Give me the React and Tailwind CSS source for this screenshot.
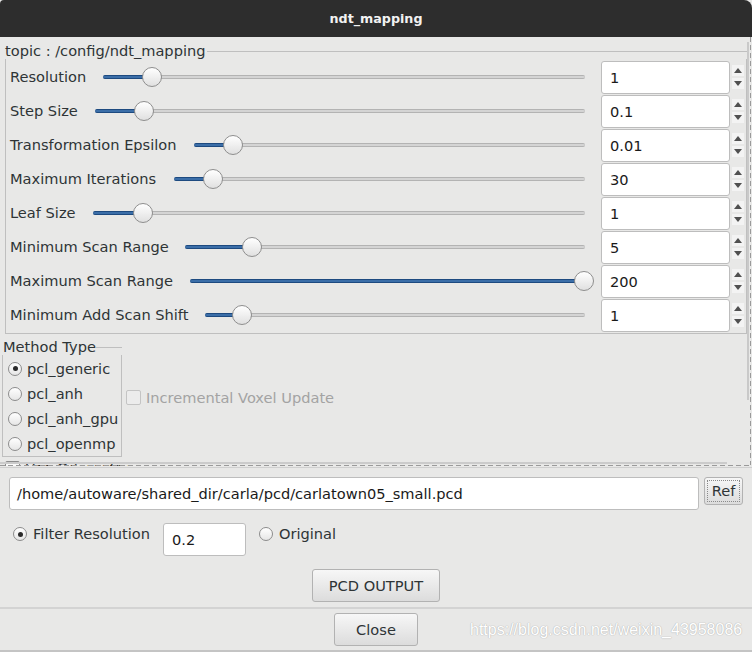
import React from "react";

const sliders = [
  { label: "Resolution", lw: 93, fill: 49, value: "1" },
  { label: "Step Size", lw: 85, fill: 49, value: "0.1" },
  { label: "Transformation Epsilon", lw: 184, fill: 39, value: "0.01" },
  { label: "Maximum Iterations", lw: 164, fill: 39, value: "30" },
  { label: "Leaf Size", lw: 83, fill: 50, value: "1" },
  { label: "Minimum Scan Range", lw: 175, fill: 67, value: "5" },
  { label: "Maximum Scan Range", lw: 180, fill: 394, value: "200" },
  { label: "Minimum Add Scan Shift", lw: 195, fill: 37, value: "1" },
];

function Slider({ fill }) {
  return (
    <div className="flex-1 flex items-center h-[20px]">
      <div
        className="h-[4px] shrink-0 bg-[#3b6ea8] border-y border-[#1d4a80] rounded-l-full"
        style={{ width: fill }}
      />
      <div className="relative z-10 shrink-0 w-[20px] h-[20px] -mx-[10px] rounded-full border border-[#8e8e8e] bg-gradient-to-b from-white to-[#e0e0e0]" />
      <div className="flex-1 h-[4px] bg-[#d4d4d4] border-y border-[#b3b3b3] rounded-r-full" />
    </div>
  );
}

function SpinArrows() {
  return (
    <div className="w-[16px] flex flex-col items-center gap-[2px]">
      <div className="w-[12px] h-[11px] bg-[#f3f3f3] flex items-center justify-center">
        <div className="w-0 h-0 border-x-[4px] border-x-transparent border-b-[5px] border-b-[#505050]" />
      </div>
      <div className="w-[12px] h-[11px] bg-[#f3f3f3] flex items-center justify-center">
        <div className="w-0 h-0 border-x-[4px] border-x-transparent border-t-[5px] border-t-[#505050]" />
      </div>
    </div>
  );
}

function Radio({ checked }) {
  return (
    <div className="w-[14px] h-[14px] shrink-0 rounded-full border border-[#8c8c8c] bg-gradient-to-b from-white to-[#e6e6e6] flex items-center justify-center">
      {checked && <div className="w-[5px] h-[5px] rounded-full bg-[#2a2a2a]" />}
    </div>
  );
}

function Button({ children, className }) {
  return (
    <div
      className={
        "flex items-center justify-center rounded-[3px] border border-[#b2b2b2] bg-gradient-to-b from-[#f7f7f7] to-[#dcdcdc] text-[#2e3436] " +
        className
      }
    >
      {children}
    </div>
  );
}

export default function App() {
  return (
    <div className="w-[752px] h-[652px] bg-white overflow-hidden font-['DejaVu_Sans',sans-serif] text-[14.6px] text-[#2e3436]">
      <div className="w-full h-full flex flex-col bg-[#e8e8e7]">
        {/* Title bar */}
        <div className="h-[37px] shrink-0 bg-[#2d2d2d] rounded-tl-[4px] rounded-tr-[8px] flex items-center justify-center">
          <span className="text-[12.7px] font-bold text-[#f2f2f2]">ndt_mapping</span>
        </div>

        {/* Scroll area */}
        <div className="h-[430px] shrink-0 relative">
          <div className="h-[429px] flex">
            <div className="flex-1 overflow-hidden pt-[6px]">
              {/* topic group */}
              <div className="ml-[5px]">
                <div className="h-[16px] flex items-center">
                  <span className="leading-[16px] whitespace-nowrap">topic : /config/ndt_mapping</span>
                  <div className="flex-1 h-px bg-[#bfbfbf] ml-[2px] mt-[1px]" />
                </div>
                <div className="border-l border-r border-b border-[#bfbfbf] pt-[1px] pb-[1px]">
                  {sliders.map((s) => (
                    <div key={s.label} className="h-[34px] flex items-start pl-[4px]">
                      <div className="h-[34px] flex items-center shrink-0" style={{ width: s.lw }}>
                        <span className="whitespace-nowrap">{s.label}</span>
                      </div>
                      <div className="flex-1 h-[34px] flex items-center">
                        <Slider fill={s.fill} />
                      </div>
                      <div className="ml-[16px] mt-[1px] w-[129px] h-[33px] shrink-0 bg-white border border-[#bdbdbd] rounded-[3px] flex items-center pl-[8px] text-[#1a1a1a]">
                        {s.value}
                      </div>
                      <div className="h-[34px] flex items-center">
                        <SpinArrows />
                      </div>
                    </div>
                  ))}
                </div>
              </div>

              {/* Method type row */}
              <div className="flex items-center ml-[2px] mt-[5px]">
                <div className="w-[120px] shrink-0">
                  <div className="h-[16px] flex items-center">
                    <span className="leading-[16px] whitespace-nowrap pl-[1px]">Method Type</span>
                    <div className="flex-1 h-px bg-[#bfbfbf] mt-[1px]" />
                  </div>
                  <div className="border-l border-r border-b border-[#bfbfbf] pt-[1px] pl-[5px]">
                    {[
                      ["pcl_generic", true],
                      ["pcl_anh", false],
                      ["pcl_anh_gpu", false],
                      ["pcl_openmp", false],
                    ].map(([t, c]) => (
                      <div key={t} className="h-[25px] flex items-center gap-[5px]">
                        <Radio checked={c} />
                        <span className="whitespace-nowrap">{t}</span>
                      </div>
                    ))}
                  </div>
                </div>
                <div className="ml-[4px] flex items-center gap-[5px]">
                  <div className="w-[15px] h-[15px] rounded-[2px] border border-[#c4c4c4] bg-[#ececec]" />
                  <span className="text-[#a3a3a3] whitespace-nowrap">Incremental Voxel Update</span>
                </div>
              </div>

              {/* Use Odometry (clipped by the scroll area) */}
              <div className="flex items-start gap-[5px] ml-[5px] mt-[2px] h-[20px]">
                <div className="w-[15px] h-[15px] mt-[2px] rounded-[2px] border border-[#8c8c8c] bg-gradient-to-b from-white to-[#e6e6e6]" />
                <span className="whitespace-nowrap leading-[18px]">Use Odometry</span>
              </div>
            </div>
            {/* vertical scrollbar */}
            <div className="w-[5px] shrink-0 flex">
              <div className="w-[2px] pt-[5px]">
                <div className="h-[358px] bg-[#c9c9c9]" />
              </div>
              <div className="w-[1px]" />
              <div className="w-[1px] h-[428px] bg-[repeating-linear-gradient(180deg,#9a9a9a_0_5px,transparent_5px_8px)]" />
            </div>
          </div>
          {/* horizontal scrollbar, drawn over the content's bottom edge */}
          <div className="absolute left-0 bottom-[1px] h-[4px] w-[751px] flex flex-col">
            <div className="h-[2px] w-[727px] bg-[#cbcbcb]" />
            <div className="h-[1px]" />
            <div className="h-[1px] w-[751px] bg-[repeating-linear-gradient(90deg,#9a9a9a_0_5px,transparent_5px_8px)]" />
          </div>
        </div>

        <div className="h-px shrink-0 bg-[#cfcfcf]" />

        {/* Bottom panel */}
        <div className="flex-1 flex flex-col">
          <div className="flex items-start pl-[9px] pt-[9px]">
            <div className="w-[690px] h-[33px] bg-white border border-[#bdbdbd] rounded-[3px] flex items-center pl-[7px] text-[#1a1a1a] whitespace-nowrap">
              /home/autoware/shared_dir/carla/pcd/carlatown05_small.pcd
            </div>
            <Button className="ml-[5px] w-[39px] h-[28px] p-[2px]">
              <div className="w-full h-full border border-dotted border-[#8a8a8a] flex items-center justify-center">Ref</div>
            </Button>
          </div>

          <div className="h-[33px] mt-[13px] flex items-start pl-[13px]">
            <div className="h-[22px] w-[150px] flex items-center shrink-0">
              <Radio checked />
              <span className="ml-[6px] whitespace-nowrap">Filter Resolution</span>
            </div>
            <div className="w-[83px] h-[33px] bg-white border border-[#bdbdbd] rounded-[3px] flex items-center pl-[8px] text-[#1a1a1a]">
              0.2
            </div>
            <div className="h-[22px] ml-[13px] flex items-center">
              <Radio />
              <span className="ml-[6px] whitespace-nowrap">Original</span>
            </div>
          </div>

          <div className="flex justify-center mt-[13px]">
            <Button className="w-[128px] h-[33px]">PCD OUTPUT</Button>
          </div>

          <div className="mt-[5px] h-[2px] bg-[#d3d3d3]" />

          <div className="flex justify-center mt-[4px] relative">
            <Button className="w-[84px] h-[33px]">Close</Button>
            <span className="absolute left-[470px] top-[8px] font-['Liberation_Sans',sans-serif] text-[16px] leading-[18px] text-white [text-shadow:0_0_1px_#b4b4b4,0_0_1px_#b4b4b4] whitespace-nowrap">
              https://blog.csdn.net/weixin_43958086
            </span>
          </div>

          <div className="mt-auto h-[2px] bg-[#c4c4c4]" />
        </div>
      </div>
    </div>
  );
}
